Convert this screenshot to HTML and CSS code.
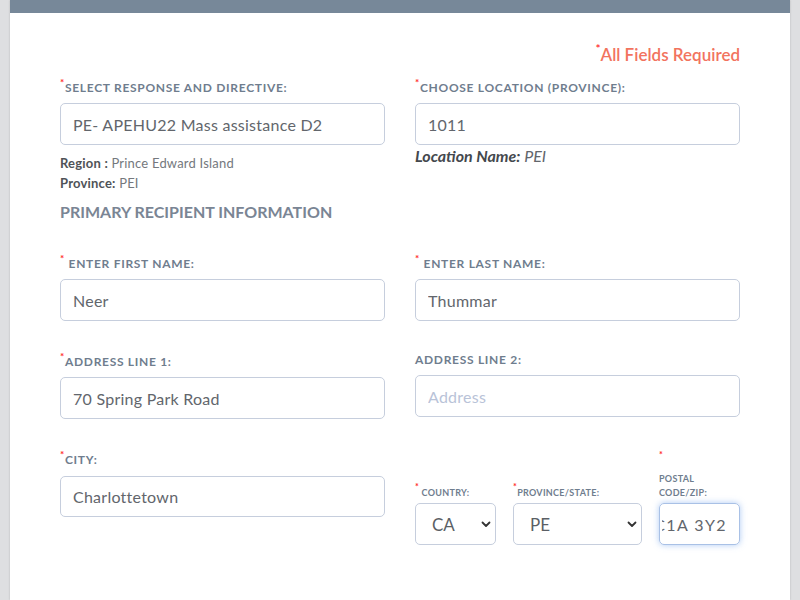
FILE: index.html
```html
<!DOCTYPE html>
<html>
<head>
<meta charset="utf-8">
<link rel="stylesheet" href="styles.css">
</head>
<body>
<div class="card">
  <div class="required"><sup class="star">*</sup>All Fields Required</div>

  <div class="row row-first">
    <div class="field">
      <label class="lbl req"><sup class="star">*</sup>SELECT RESPONSE AND DIRECTIVE:</label>
      <input class="inp" type="text" value="PE- APEHU22 Mass assistance D2">
      <div class="meta meta-first"><b>Region :</b> Prince Edward Island</div>
      <div class="meta"><b>Province:</b> PEI</div>
    </div>
    <div class="field">
      <label class="lbl req"><sup class="star">*</sup>CHOOSE LOCATION (PROVINCE):</label>
      <input class="inp" type="text" value="1011">
      <div class="locname"><b>Location Name:</b> PEI</div>
    </div>
  </div>

  <h3 class="section">PRIMARY RECIPIENT INFORMATION</h3>

  <div class="row row-second">
    <div class="field">
      <label class="lbl req"><sup class="star">*</sup> ENTER FIRST NAME:</label>
      <input class="inp" type="text" value="Neer">
    </div>
    <div class="field">
      <label class="lbl req"><sup class="star">*</sup> ENTER LAST NAME:</label>
      <input class="inp" type="text" value="Thummar">
    </div>
  </div>

  <div class="row row-next">
    <div class="field">
      <label class="lbl req"><sup class="star">*</sup>ADDRESS LINE 1:</label>
      <input class="inp" type="text" value="70 Spring Park Road">
    </div>
    <div class="field">
      <label class="lbl">ADDRESS LINE 2:</label>
      <input class="inp" type="text" placeholder="Address">
    </div>
  </div>

  <div class="row row-last">
    <div class="field">
      <label class="lbl req"><sup class="star">*</sup>CITY:</label>
      <input class="inp inp-city" type="text" value="Charlottetown">
    </div>
    <div class="subrow">
      <div class="subfield">
        <label class="sublbl"><sup class="star">*</sup> COUNTRY:</label>
        <div class="selwrap">
          <div class="sel">CA</div>
          <svg class="chev" width="10" height="7" viewBox="0 0 10 7"><path d="M1.5 1.5 L5 5 L8.5 1.5" fill="none" stroke="#333" stroke-width="1.8" stroke-linecap="round" stroke-linejoin="round"/></svg>
        </div>
      </div>
      <div class="subfield">
        <label class="sublbl"><sup class="star">*</sup>PROVINCE/STATE:</label>
        <div class="selwrap">
          <div class="sel">PE</div>
          <svg class="chev" width="10" height="7" viewBox="0 0 10 7"><path d="M1.5 1.5 L5 5 L8.5 1.5" fill="none" stroke="#333" stroke-width="1.8" stroke-linecap="round" stroke-linejoin="round"/></svg>
        </div>
      </div>
      <div class="subfield">
        <label class="sublbl postal"><span class="starline">*</span>POSTAL<br>CODE/ZIP:</label>
        <div class="postin"><div class="clip"><span>C1A 3Y2</span></div></div>
      </div>
    </div>
  </div>
</div>
</body>
</html>
```

FILE: styles.css
```css
* { box-sizing: border-box; }
html, body { margin: 0; padding: 0; }
body {
  background: #dedfe1;
  font-family: Lato, "Open Sans", sans-serif;
  height: 600px;
  overflow: hidden;
}
.card {
  margin: 0 10px;
  background: #fff;
  border-top: 13px solid #778899;
  padding: 0 50px;
  height: 600px;
  box-shadow: 0 0 2px rgba(0,0,0,0.18);
}
.star {
  color: #ff2a2a;
  font-size: 10px;
  vertical-align: top;
  line-height: 10px;
  position: relative;
  top: -3px;
}
.required {
  margin-top: 32px;
  text-align: right;
  color: #f2735e;
  font-size: 17px;
  font-weight: 600;
  line-height: 20px;
}
.required .star { font-size: 12px; top: -1px; }
.row {
  display: grid;
  grid-template-columns: minmax(0, 1fr) minmax(0, 1fr);
  column-gap: 30px;
  align-items: start;
}
.row-first { margin-top: 13px; }
.row-second { margin-top: 32px; }
.row-next { margin-top: 31px; }
.row-last { margin-top: 31px; }
.field { display: flex; flex-direction: column; min-width: 0; }
.lbl {
  display: block;
  color: #6f7d8e;
  font-size: 12px;
  font-weight: 700;
  line-height: 16px;
  letter-spacing: 0.7px;
  margin-bottom: 7px;
}
.lbl.req { padding-top: 2px; }
.inp {
  display: block;
  width: 100%;
  height: 42px;
  border: 1px solid #c6cedd;
  border-radius: 5px;
  padding: 0 12px;
  font-family: Lato, "Open Sans", sans-serif;
  font-size: 16px;
  letter-spacing: 0.25px;
  color: #62666c;
  outline: none;
  background: #fff;
}
.inp::placeholder { color: #b9c3d8; }
.inp-city { height: 41px; margin-top: 1px; }
.meta {
  font-size: 13px;
  line-height: 20px;
  color: #74787d;
  letter-spacing: 0.2px;
}
.meta b { color: #4f5357; font-weight: 700; }
.meta-first { margin-top: 8px; }
.locname {
  font-size: 16px;
  line-height: 20px;
  font-style: italic;
  color: #62666c;
  margin-top: 1px;
}
.locname b { color: #44484d; }
.section {
  margin: 9px 0 0;
  font-size: 16px;
  line-height: 20px;
  font-weight: 700;
  color: #7a8594;
}
.subrow {
  display: grid;
  grid-template-columns: 81px 129px minmax(0, 1fr);
  column-gap: 17px;
  align-items: end;
  min-width: 0;
}
.subfield { display: flex; flex-direction: column; min-width: 0; }
.sublbl {
  display: block;
  color: #6f7d8e;
  font-size: 9px;
  font-weight: 700;
  line-height: 14px;
  margin-bottom: 3px;
  letter-spacing: 0.3px;
}
.sublbl .star { font-size: 9px; top: -4px; }
.starline {
  display: block;
  color: #ff2a2a;
  font-size: 9px;
  line-height: 10px;
  height: 22px;
}
.selwrap { position: relative; }
.sel {
  height: 42px;
  border: 1px solid #c6cedd;
  border-radius: 5px;
  padding: 0 16px;
  font-size: 17px;
  color: #5b5f65;
  display: flex;
  align-items: center;
}
.chev {
  position: absolute;
  right: 5px;
  top: 18px;
}
.postin {
  height: 42px;
  border: 1px solid #a9c1e6;
  border-radius: 5px;
  padding: 0 12px 0 2px;
  font-size: 16px;
  color: #62666c;
  display: flex;
  align-items: center;
  min-width: 0;
  box-shadow: 0 0 6px rgba(110, 160, 235, 0.55);
}
.clip {
  flex: 1;
  min-width: 0;
  overflow: hidden;
  display: flex;
  justify-content: flex-end;
  white-space: nowrap;
}
.clip span { flex: none; letter-spacing: 1.4px; }
```
